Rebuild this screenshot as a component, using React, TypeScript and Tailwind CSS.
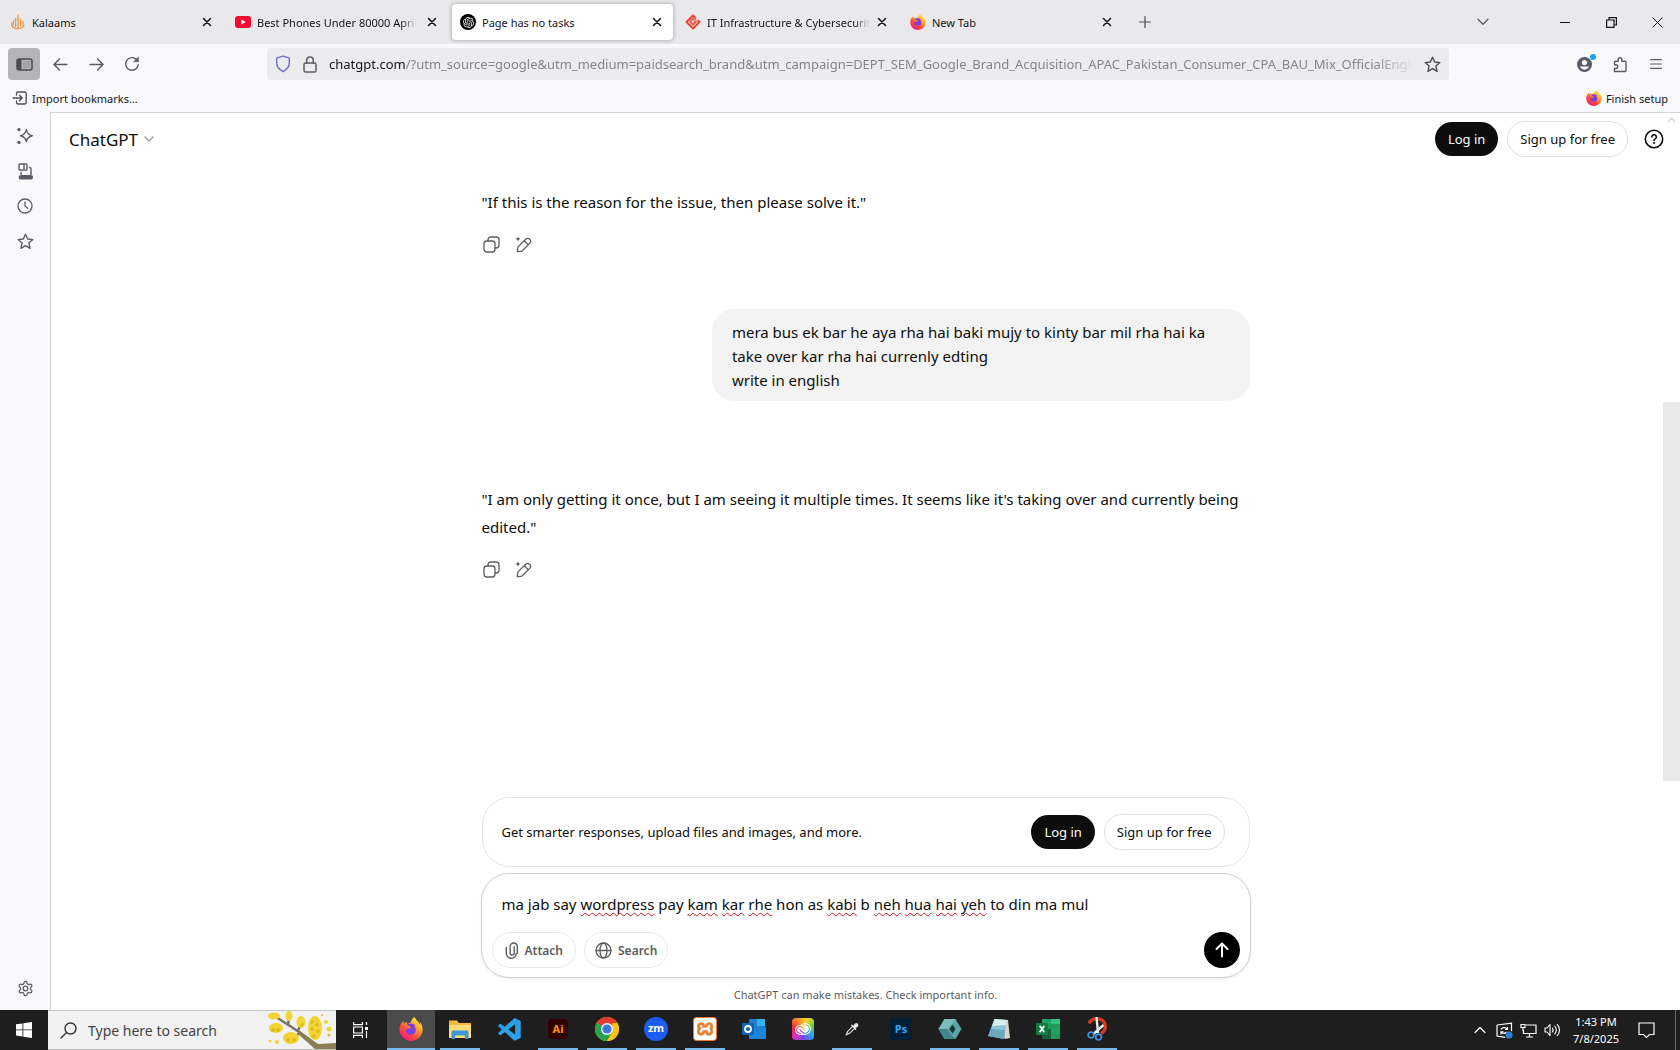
import React, { useState } from "react";
import { SiOpenai, SiFirefoxbrowser, SiXampp, SiAdobecreativecloud } from "react-icons/si";
import { BiLogoVisualStudio } from "react-icons/bi";

const stroke = {
  fill: "none",
  stroke: "currentColor",
  strokeLinecap: "round" as const,
  strokeLinejoin: "round" as const,
};

/* ---------- browser icons ---------- */

function Firefox({ size, id }: { size: number; id: string }) {
  return (
    <svg width={size} height={size} viewBox="0 0 24 24" className="shrink-0" aria-hidden="true">
      <defs>
        <linearGradient id={id} x1="0.85" y1="0.05" x2="0.2" y2="0.95">
          <stop offset="0" stopColor="#fff04a" />
          <stop offset="0.35" stopColor="#ffa62b" />
          <stop offset="0.65" stopColor="#ff4f3d" />
          <stop offset="1" stopColor="#ee1a78" />
        </linearGradient>
      </defs>
      <circle cx="12" cy="13" r="7.5" fill="#7a3fe0" />
      <SiFirefoxbrowser size={24} fill={`url(#${id})`} />
    </svg>
  );
}

function Close() {
  return (
    <svg width="10" height="10" viewBox="0 0 10 10" {...stroke} strokeWidth="1.5">
      <path d="M1.5 1.5l7 7M8.5 1.5l-7 7" />
    </svg>
  );
}

function KalaamsIcon() {
  return (
    <svg width="16" height="16" viewBox="0 0 16 16" {...stroke} stroke="#f0953f" strokeWidth="1.3">
      <path d="M8 1v13M5.6 4.5v8M3.3 7v4M10.6 5v6.5M13 7.5V11M1.5 9.5c0 3 2.6 5.3 6 5.300M8 14.500c3 0 5-1 6-3" />
    </svg>
  );
}

function YoutubeIcon() {
  return (
    <svg width="16" height="16" viewBox="0 0 16 16">
      <rect x="0" y="2" width="16" height="12" rx="3" fill="#f8082f" />
      <path d="M6.3 5.4v5.2L10.8 8z" fill="#fff" />
    </svg>
  );
}

function ChatGptFavicon() {
  return (
    <span className="flex size-4 items-center justify-center rounded-full bg-black text-white">
      <SiOpenai size={11} />
    </span>
  );
}

function RedDiamond() {
  return (
    <svg width="16" height="16" viewBox="0 0 16 16" fill="none" stroke="#ea4335" strokeWidth="2" strokeLinejoin="round">
      <path d="M10.5 3.8L8 1.5 1.5 8 8 14.5 14.5 8l-1.8-1.7" />
      <path d="M11 5.500L8.600 3.800 5 7.600l3 3.100 3.300-3.300H8.400" stroke="#f0604d" />
    </svg>
  );
}

function Puzzle() {
  return (
    <svg width="17" height="17" viewBox="0 0 17 17" {...stroke} strokeWidth="1.4">
      <path d="M2.5 15.5H13a1 1 0 0 0 1-1V6.300a1 1 0 0 0-1-1H9.800V3.500a1.800 1.800 0 0 0-3.600 0v1.800H3.500a1 1 0 0 0-1 1v2.400h1.300a1.900 1.900 0 0 1 0 3.800H2.500z" />
    </svg>
  );
}

function Star({ size }: { size: number }) {
  return (
    <svg width={size} height={size} viewBox="0 0 16 16" {...stroke} strokeWidth="1.3">
      <path d="M8 1.200l2 4.500 4.900.5-3.700 3.300 1.100 4.900L8 11.900l-4.300 2.500 1.100-4.900L1.100 6.200 6 5.700z" />
    </svg>
  );
}

/* ---------- window chrome ---------- */

const tabs = [
  { title: "Kalaams", icon: <KalaamsIcon /> },
  { title: "Best Phones Under 80000 April", icon: <YoutubeIcon />, fade: true },
  { title: "Page has no tasks", icon: <ChatGptFavicon />, active: true },
  { title: "IT Infrastructure & Cybersecurit", icon: <RedDiamond />, fade: true },
  { title: "New Tab", icon: <Firefox size={16} id="ff-tab" /> },
];

function TabStrip() {
  return (
    <div className="flex h-11 items-center bg-[#e9e9eb] pl-0.5 text-[#15141a]">
      <div className="flex min-w-0 gap-1" role="tablist">
        {tabs.map((t) => (
          <div
            key={t.title}
            className={
              t.active
                ? "flex h-9 w-[221px] items-center rounded bg-white pr-[11px] pl-2 shadow-[0_0_4px_rgba(0,0,0,0.35)]"
                : "flex h-9 w-[221px] items-center rounded pr-[11px] pl-2"
            }
          >
            <button role="tab" aria-selected={!!t.active} className="flex min-w-0 flex-1 items-center gap-1.5">
              <span className="shrink-0">{t.icon}</span>
              <span
                className={
                  t.fade
                    ? "pt-0.5 text-[11px] whitespace-nowrap [mask-image:linear-gradient(to_left,transparent,black_16px)]"
                    : "pt-0.5 text-[11px] whitespace-nowrap"
                }
              >
                {t.title}
              </span>
            </button>
            <button aria-label={`Close ${t.title}`} className="shrink-0">
              <Close />
            </button>
          </div>
        ))}
      </div>
      <button aria-label="New tab" className="ml-3 p-1 text-[#4a4a52]">
        <svg width="12" height="12" viewBox="0 0 12 12" {...stroke} strokeWidth="1.2">
          <path d="M6 .6v10.800M.6 6h10.800" />
        </svg>
      </button>
      <div className="ml-auto flex items-center text-[#15141a]">
        <button aria-label="List all tabs" className="mr-9 flex w-[46px] justify-center text-[#5b5b66]">
          <svg width="12" height="8" viewBox="0 0 12 8" {...stroke} strokeWidth="1.3">
            <path d="M1 1.200l5 5 5-5" />
          </svg>
        </button>
        <button aria-label="Minimize" className="flex w-[46px] justify-center">
          <svg width="10" height="10" viewBox="0 0 10 10" stroke="currentColor">
            <path d="M0 5.5h10" />
          </svg>
        </button>
        <button aria-label="Restore" className="flex w-[46px] justify-center">
          <svg width="11" height="11" viewBox="0 0 11 11" fill="none" stroke="currentColor" strokeWidth="1.2">
            <path d="M.6 3h7.400v7.400H.6zM3 3V.6h7.400V8H8" />
          </svg>
        </button>
        <button aria-label="Close window" className="flex w-[46px] justify-center">
          <svg width="11" height="11" viewBox="0 0 11 11" stroke="currentColor">
            <path d="M.5.5l10 10M10.500.5l-10 10" />
          </svg>
        </button>
      </div>
    </div>
  );
}

const urlTail =
  "/?utm_source=google&utm_medium=paidsearch_brand&utm_campaign=DEPT_SEM_Google_Brand_Acquisition_APAC_Pakistan_Consumer_CPA_BAU_Mix_OfficialEngli";

function Toolbar() {
  return (
    <div className="flex h-10 items-center px-2 text-[#5b5b66]">
      <button aria-label="Toggle sidebar" className="flex size-8 items-center justify-center rounded bg-[#b4b4b8] text-[#4a4a55]">
        <svg width="17" height="13" viewBox="0 0 17 13">
          <rect x="1" y="1" width="15" height="11" rx="2" fill="none" stroke="currentColor" strokeWidth="1.5" />
          <path d="M1 1h4.500v11H1z" fill="currentColor" />
          <rect x="7" y="3" width="7.5" height="7" fill="#a2a2a8" />
        </svg>
      </button>
      <div className="ml-1 flex gap-1">
        <button aria-label="Back" className="flex size-8 items-center justify-center">
          <svg width="15" height="13" viewBox="0 0 15 13" {...stroke} strokeWidth="1.5">
            <path d="M14 6.500H1.200M6.400 1L1 6.500 6.400 12" />
          </svg>
        </button>
        <button aria-label="Forward" className="flex size-8 items-center justify-center">
          <svg width="15" height="13" viewBox="0 0 15 13" {...stroke} strokeWidth="1.5">
            <path d="M1 6.500h12.800M8.600 1L14 6.500 8.600 12" />
          </svg>
        </button>
        <button aria-label="Reload" className="flex size-8 items-center justify-center">
          <svg width="16" height="16" viewBox="0 0 16 16" {...stroke} strokeWidth="1.4">
            <path d="M14.200 8.800A6.300 6.300 0 1 1 12.600 3.700" />
            <path d="M14.400 1.200v4.600H9.800z" fill="currentColor" strokeWidth=".6" />
          </svg>
        </button>
      </div>
      <div className="ml-[119px] flex h-8 min-w-0 flex-1 items-center rounded bg-[#ececee] px-2">
        <svg width="16" height="18" viewBox="0 0 16 18" {...stroke} stroke="#6f6bd0" strokeWidth="1.4" className="shrink-0">
          <path d="M8 1.200l6.300 2v4.600c0 4-2.600 7-6.300 8.900-3.700-1.900-6.300-4.900-6.300-8.900V3.200z" />
        </svg>
        <svg width="14" height="17" viewBox="0 0 14 17" {...stroke} strokeWidth="1.5" className="ml-3 shrink-0">
          <rect x="1" y="7" width="12" height="9" rx="1.5" />
          <path d="M3.700 7V4.300a3.300 3.300 0 0 1 6.600 0V7" />
        </svg>
        <div className="ml-3 min-w-0 pt-0.5 text-[13px] whitespace-nowrap text-[#85858b] [mask-image:linear-gradient(to_left,transparent,black_40px)]">
          <span className="text-[#15141a]">chatgpt.com</span>
          {urlTail}
        </div>
        <button aria-label="Bookmark this page" className="ml-auto shrink-0 text-[#4a4a52]">
          <Star size={17} />
        </button>
      </div>
      <div className="ml-[119px] flex gap-1">
        <button aria-label="Account" className="relative flex size-8 items-center justify-center">
          <svg width="15" height="15" viewBox="0 0 15 15">
            <circle cx="7.5" cy="7.5" r="7.5" fill="#5b5b66" />
            <circle cx="7.5" cy="5.6" r="2.6" fill="#f9f9fb" />
            <path d="M2.900 9.600h9.200a5 5 0 0 1-9.200 0z" fill="#f9f9fb" />
          </svg>
          <span className="absolute top-1.5 right-1 size-1.5 rounded-full bg-[#14a5ec]" />
        </button>
        <button aria-label="Extensions" className="flex size-8 items-center justify-center">
          <Puzzle />
        </button>
        <button aria-label="Menu" className="flex size-8 items-center justify-center">
          <svg width="12" height="12" viewBox="0 0 12 12" {...stroke} strokeWidth="1.2">
            <path d="M.6 1.600h10.800M.6 6h10.800M.6 10.400h10.800" />
          </svg>
        </button>
      </div>
    </div>
  );
}

function BookmarksBar() {
  return (
    <div className="flex h-7 items-center justify-between px-3 text-[11px] text-[#15141a]">
      <button className="flex items-center gap-1">
        <svg width="16" height="14" viewBox="0 0 16 14" {...stroke} stroke="#4a4a52" strokeWidth="1.3">
          <path d="M4.500 4V2.500A1.500 1.500 0 0 1 6 1h6.700a1.500 1.500 0 0 1 1.500 1.500v9a1.500 1.500 0 0 1-1.500 1.500H6a1.500 1.500 0 0 1-1.500-1.500V10M1 7h9M7.500 4.300L10.200 7 7.500 9.700" />
        </svg>
        <span className="pt-0.5">Import bookmarks...</span>
      </button>
      <button className="flex items-center gap-1">
        <Firefox size={16} id="ff-setup" />
        <span className="pt-0.5">Finish setup</span>
      </button>
    </div>
  );
}

function Sidebar() {
  return (
    <aside className="flex w-[50px] shrink-0 flex-col items-center justify-between pt-2 pb-1.5 text-[#5b5b66]">
      <div className="flex flex-col gap-[3px]">
        <button aria-label="AI chatbot" className="flex size-8 items-center justify-center">
          <svg width="18" height="18" viewBox="0 0 18 18" {...stroke} strokeWidth="1.4">
            <path d="M10.300 2.800c.8 3.700 2.200 5 6 5.900-3.800.8-5.200 2.200-6 5.900-.8-3.700-2.200-5.100-5.900-5.900 3.700-.9 5.100-2.200 5.900-5.900z" />
            <circle cx="3" cy="2.600" r="1" fill="currentColor" />
            <circle cx="3" cy="15.400" r="1" fill="currentColor" />
          </svg>
        </button>
        <button aria-label="Synced tabs" className="flex size-8 items-center justify-center">
          <svg width="17" height="17" viewBox="0 0 17 17" {...stroke} strokeWidth="1.4">
            <rect x="2" y="1" width="8" height="6" rx="1" />
            <path d="M7 1.500v4M4 9.500v2.200a1 1 0 0 0 1 1h8a1 1 0 0 0 1-1V6a1.500 1.500 0 0 0-1.500-1.500" />
            <path d="M2.500 13.200h12.700v1.500a1 1 0 0 1-1 1H3.500a1 1 0 0 1-1-1z" fill="currentColor" />
          </svg>
        </button>
        <button aria-label="History" className="flex size-8 items-center justify-center">
          <svg width="16" height="16" viewBox="0 0 16 16" {...stroke} strokeWidth="1.3">
            <circle cx="8" cy="8" r="7" />
            <path d="M8 3.800V8l2.600 2.300" />
          </svg>
        </button>
        <button aria-label="Bookmarks" className="flex size-8 items-center justify-center">
          <Star size={17} />
        </button>
      </div>
      <button aria-label="Customize sidebar" className="flex size-8 items-center justify-center">
        <svg width="17" height="17" viewBox="0 0 24 24" {...stroke} strokeWidth="1.8">
          <path d="M12.220 2h-.44a2 2 0 0 0-2 2v.18a2 2 0 0 1-1 1.730l-.43.25a2 2 0 0 1-2 0l-.15-.08a2 2 0 0 0-2.730.73l-.22.38a2 2 0 0 0 .73 2.730l.15.100a2 2 0 0 1 1 1.720v.51a2 2 0 0 1-1 1.740l-.15.090a2 2 0 0 0-.73 2.730l.22.38a2 2 0 0 0 2.730.73l.15-.08a2 2 0 0 1 2 0l.43.25a2 2 0 0 1 1 1.730V20a2 2 0 0 0 2 2h.44a2 2 0 0 0 2-2v-.18a2 2 0 0 1 1-1.730l.43-.25a2 2 0 0 1 2 0l.15.080a2 2 0 0 0 2.730-.73l.22-.39a2 2 0 0 0-.73-2.730l-.15-.08a2 2 0 0 1-1-1.740v-.5a2 2 0 0 1 1-1.740l.15-.09a2 2 0 0 0 .73-2.730l-.22-.38a2 2 0 0 0-2.730-.73l-.15.080a2 2 0 0 1-2 0l-.43-.25a2 2 0 0 1-1-1.730V4a2 2 0 0 0-2-2z" />
          <circle cx="12" cy="12" r="3.2" />
        </svg>
      </button>
    </aside>
  );
}

/* ---------- chat ---------- */

function AuthButtons() {
  return (
    <div className="flex items-center gap-[9px] text-[13px]">
      <button className="h-[34px] rounded-full bg-[#0d0d0d] px-[13px] pt-0.5 text-white">Log in</button>
      <button className="h-9 rounded-full border border-[#dedede] bg-white px-3 pt-0.5 text-[#0d0d0d]">
        Sign up for free
      </button>
    </div>
  );
}

function MessageActions() {
  return (
    <div className="mt-3 -ml-1.5 flex text-[#5d5d5d]">
      <button aria-label="Copy" className="flex size-8 items-center justify-center">
        <svg width="17" height="17" viewBox="0 0 17 17" {...stroke} strokeWidth="1.3">
          <rect x="1" y="5" width="11" height="11" rx="2.8" />
          <path d="M5 5V3.800A2.800 2.800 0 0 1 7.800 1h5.400A2.800 2.800 0 0 1 16 3.800v5.400a2.800 2.800 0 0 1-2.800 2.800H12" />
        </svg>
      </button>
      <button aria-label="Edit in canvas" className="flex size-8 items-center justify-center">
        <svg width="17" height="17" viewBox="0 0 17 17" {...stroke} strokeWidth="1.3">
          <path d="M2.300 15.700l.4-3.600a3 3 0 0 1 .8-1.700l7.100-7.100a2.950 2.950 0 0 1 4.100 0 2.950 2.950 0 0 1 0 4.100l-7.100 7.100a3 3 0 0 1-1.700.8zM9.300 4.700l4 4" />
          <path d="M3 0c.3 1.900.8 2.500 2.800 2.900C3.800 3.300 3.300 3.900 3 5.800c-.3-1.900-.8-2.500-2.800-2.900C2.200 2.500 2.700 1.900 3 0z" fill="currentColor" stroke="none" />
        </svg>
      </button>
    </div>
  );
}

const misspelt = new Set(["wordpress", "kam", "kar", "rhe", "kabi", "neh", "hua", "hai", "yeh"]);

function Composer() {
  const [draft, setDraft] = useState(
    "ma jab say wordpress pay kam kar rhe hon as kabi b neh hua hai yeh to din ma mul",
  );
  return (
    <form
      className="-mx-px mt-1.5 rounded-[28px] border border-[#cfcfcf] bg-white px-2.5 pt-[18px] pb-[9px] shadow-[0_1px_3px_rgba(0,0,0,0.08)]"
      onSubmit={(e) => e.preventDefault()}
    >
      <div className="grid px-2.5 text-[15px] leading-6">
        <textarea
          aria-label="Message ChatGPT"
          rows={1}
          spellCheck={false}
          value={draft}
          onChange={(e) => setDraft(e.target.value)}
          className="col-start-1 row-start-1 block w-full resize-none overflow-hidden text-[#0d0d0d] outline-none"
        />
        <div aria-hidden="true" className="pointer-events-none col-start-1 row-start-1 whitespace-pre-wrap text-transparent">
          {draft.split(" ").map((w, i) => (
            <React.Fragment key={i}>
              {i > 0 && " "}
              {misspelt.has(w) ? (
                <span className="underline decoration-[#d01822] decoration-wavy decoration-1 underline-offset-2 [text-decoration-skip-ink:none]">
                  {w}
                </span>
              ) : (
                w
              )}
            </React.Fragment>
          ))}
        </div>
      </div>
      <div className="mt-4 flex items-center gap-2 text-[12px] font-semibold text-[#5d5d5d]">
        <button type="button" className="flex h-9 items-center gap-1.5 rounded-full border border-[#e8e8e8] px-3">
          <svg width="14" height="17" viewBox="0 0 14 17" {...stroke} strokeWidth="1.4">
            <path d="M1.300 5.500v5.700a5 5 0 0 0 10 .3M12.300 4.500v6.700M12.300 9V4.600a3.600 3.600 0 0 0-7.200 0v6.300a2 2 0 0 0 4.100 0V4.800" />
          </svg>
          <span className="pt-0.5">Attach</span>
        </button>
        <button type="button" className="flex h-9 items-center gap-1.5 rounded-full border border-[#e8e8e8] px-2.5">
          <svg width="17" height="17" viewBox="0 0 17 17" {...stroke} strokeWidth="1.3">
            <circle cx="8.5" cy="8.5" r="7.5" />
            <ellipse cx="8.5" cy="8.5" rx="3.5" ry="7.5" />
            <path d="M1 8.500h15" />
          </svg>
          <span className="pt-0.5">Search</span>
        </button>
        <button type="submit" aria-label="Send message" className="ml-auto flex size-9 items-center justify-center rounded-full bg-black text-white">
          <svg width="14" height="16" viewBox="0 0 14 16" {...stroke} strokeWidth="2">
            <path d="M7 14.500V1.800M1.500 7L7 1.500 12.500 7" />
          </svg>
        </button>
      </div>
    </form>
  );
}

function Chat() {
  return (
    <main className="relative flex min-w-0 flex-1 flex-col border-t border-l border-[#d2d2d4] bg-white text-[#0d0d0d]">
      <header className="flex h-[52px] shrink-0 items-center pr-4 pl-[18px]">
        <button className="mr-auto flex items-center gap-1.5 text-[17px]">
          <span className="pt-0.5">ChatGPT</span>
          <svg width="10" height="7" viewBox="0 0 10 7" {...stroke} stroke="#9b9b9b" strokeWidth="1.4">
            <path d="M1 1l4 4 4-4" />
          </svg>
        </button>
        <AuthButtons />
        <button aria-label="Help" className="ml-4">
          <svg width="20" height="20" viewBox="0 0 20 20" {...stroke} strokeWidth="1.6">
            <circle cx="10" cy="10" r="8.7" />
            <path d="M7.800 7.900a2.250 2.250 0 1 1 3.400 2c-.8.500-1.200.9-1.200 1.700" />
            <circle cx="10" cy="14" r=".6" fill="currentColor" strokeWidth=".8" />
          </svg>
        </button>
      </header>

      <div className="mx-auto flex w-full max-w-[768px] flex-1 flex-col">
        <article className="pt-[23px] text-[15px] leading-7">
          <p>"If this is the reason for the issue, then please solve it."</p>
          <MessageActions />
        </article>
        <article className="mt-[49px] ml-auto w-[70%] rounded-[22px] bg-[#f3f3f3] px-5 pt-[11px] pb-[9px] text-[15px] leading-6">
          mera bus ek bar he aya rha hai baki mujy to kinty bar mil rha hai ka take over kar rha hai currenly edting
          <br />
          write in english
        </article>
        <article className="mt-[84px] text-[15px] leading-7">
          <p>
            "I am only getting it once, but I am seeing it multiple times. It seems like it's taking over and currently
            being edited."
          </p>
          <MessageActions />
        </article>

        <div className="mt-auto">
          <div className="flex h-[70px] items-center justify-between rounded-[28px] border border-[#e6e6e6] pr-6 pl-[19px]">
            <p className="pt-0.5 text-[13px]">Get smarter responses, upload files and images, and more.</p>
            <AuthButtons />
          </div>
          <Composer />
          <p className="flex h-8 items-center justify-center pt-0.5 text-[11px] text-[#5d5d5d]">
            ChatGPT can make mistakes. Check important info.
          </p>
        </div>
      </div>

      <div className="absolute inset-y-0 right-0 flex w-[17px] flex-col items-center" aria-hidden="true">
        <svg width="9" height="6" viewBox="0 0 9 6" {...stroke} stroke="#d8d8d8" strokeWidth="1.3" className="mt-1 mb-[279px]">
          <path d="M1 5l3.500-4L8 5" />
        </svg>
        <div className="h-[379px] w-full bg-[#e9e9e9]" />
      </div>
    </main>
  );
}

/* ---------- taskbar ---------- */

function Explorer() {
  return (
    <svg width="24" height="24" viewBox="0 0 24 24">
      <path d="M1 3.500h8l2 2.500h12v15H1z" fill="#f5b83d" />
      <path d="M1 8h22v13H1z" fill="#fddc78" />
      <path d="M5 13.500h14a1.500 1.500 0 0 1 1.500 1.500v7h-3.500v-3.500H7V22H3.500v-7A1.500 1.500 0 0 1 5 13.500z" fill="#3e97d8" />
    </svg>
  );
}

function Chrome() {
  return (
    <svg width="24" height="24" viewBox="0 0 24 24">
      <circle cx="12" cy="12" r="12" fill="#fbc116" />
      <path d="M12 12L1.600 6A12 12 0 0 1 22.400 6z" fill="#e33b2e" />
      <path d="M1.600 6A12 12 0 0 0 12 24l5.200-9L12 12z" fill="#2ba24c" />
      <path d="M22.400 6A12 12 0 0 1 12 24l5.200-9V6z" fill="#fbc116" />
      <circle cx="12" cy="12" r="6" fill="#fff" />
      <circle cx="12" cy="12" r="4.6" fill="#3b78e7" />
    </svg>
  );
}

function Outlook() {
  return (
    <svg width="24" height="24" viewBox="0 0 24 24">
      <rect x="7" y="2" width="16" height="13" rx="1" fill="#1f7fd1" />
      <path d="M15 2h8v7h-8z" fill="#36b0ee" />
      <path d="M7 11l8 4 9-5v11a1 1 0 0 1-1 1H8a1 1 0 0 1-1-1z" fill="#1a86d9" />
      <rect x="0" y="6" width="12" height="12" rx="1" fill="#0f62b4" />
      <circle cx="6" cy="12" r="3" fill="none" stroke="#fff" strokeWidth="1.8" />
    </svg>
  );
}

function Eyedropper() {
  return (
    <svg width="14" height="14" viewBox="0 0 16 16" fill="none" stroke="#e8e8e8" strokeWidth="1.3" strokeLinecap="round">
      <path d="M8.800 5L3 10.800 1.500 14.500l3.700-1.500L11 7.200" />
      <path d="M7.800 3.800l4.400 4.400M9.800 5.300l2-2.800a1.500 1.500 0 0 1 2.200 2.200l-2.800 2z" fill="#e8e8e8" strokeWidth="1.6" />
    </svg>
  );
}

function Hexagon() {
  return (
    <svg width="24" height="24" viewBox="0 0 24 24">
      <path d="M6.500 2h11L23.500 12l-6 10h-11L.5 12z" fill="#5ba3a5" />
      <path d="M.5 12h9l2.500 5 5.500 5h-11z" fill="#3f8589" />
      <path d="M6.500 2h11l-5 7-3 3h-9z" fill="#79bebd" />
      <path d="M14.500 7.500l3 4.500-3 4.500-3-4.500z" fill="#163438" />
    </svg>
  );
}

function Notepad() {
  return (
    <svg width="24" height="24" viewBox="0 0 24 24">
      <path d="M7.500 2.500L21 3l2 18-5 1z" fill="#d9d5c9" />
      <path d="M7.500 2L20 3l-3 19L1 19z" fill="#8fc3d6" />
      <path d="M7.500 2L20 3l-1 5L5 9z" fill="#d7ecf3" />
      <path d="M4 12l14 1-1 9L1 19z" fill="#6ba7bd" />
    </svg>
  );
}

function Excel() {
  return (
    <svg width="24" height="24" viewBox="0 0 24 24">
      <rect x="6" y="2" width="18" height="20" rx="1" fill="#1f9a5b" />
      <path d="M15 2h9v5h-9z" fill="#33c481" />
      <path d="M6 2h9v5H6zM15 12h9v5h-9z" fill="#21a366" />
      <path d="M6 12h9v10H6z" fill="#17603a" />
      <rect x="0" y="6" width="12" height="12" rx="1" fill="#107c41" />
      <path d="M3.700 8.800l4.600 6.400M8.300 8.800l-4.600 6.400" stroke="#fff" strokeWidth="1.7" />
    </svg>
  );
}

function Snip() {
  return (
    <svg width="24" height="26" viewBox="0 0 24 26" fill="none">
      <path d="M4 7.500C6 2.500 13 1 17.500 4.500S21 15 16 17.500" stroke="#d83a20" strokeWidth="3.2" />
      <path d="M11.500 1l1.500 16M18.500 9l-10 9" stroke="#e8edf0" strokeWidth="2.4" />
      <circle cx="6" cy="19" r="2.8" stroke="#3a8fd8" strokeWidth="1.8" />
      <circle cx="13.500" cy="21" r="2.8" stroke="#3a8fd8" strokeWidth="1.8" />
    </svg>
  );
}

function CreativeCloud() {
  return (
    <span className="flex size-[22px] items-center justify-center rounded bg-[conic-gradient(from_20deg,#f7d32c,#6fd23f,#2aa6e8,#6a4bf0,#e02bc0,#f02b3c,#f98a2a,#f7d32c)] text-white">
      <SiAdobecreativecloud size={16} />
    </span>
  );
}

const tile = "flex items-center justify-center text-[11px] font-bold";

const apps: { name: string; icon: React.ReactNode; open?: boolean; active?: boolean }[] = [
  { name: "Firefox", icon: <Firefox size={24} id="ff-task" />, active: true },
  { name: "File Explorer", icon: <Explorer />, open: true },
  { name: "Visual Studio Code", icon: <BiLogoVisualStudio size={27} color="#2b9fe6" /> },
  {
    name: "Illustrator",
    icon: <span className={`${tile} size-[20px] rounded-sm bg-[#330000] text-[#ff9a00]`}>Ai</span>,
    open: true,
  },
  { name: "Chrome", icon: <Chrome />, open: true },
  {
    name: "Zoom",
    icon: <span className={`${tile} size-6 rounded-full bg-[#1c5cf0] pb-0.5 text-white`}>zm</span>,
    open: true,
  },
  {
    name: "XAMPP",
    icon: (
      <span className="flex size-6 items-center justify-center rounded bg-[#ee7a2d] text-white">
        <SiXampp size={22} />
      </span>
    ),
    open: true,
  },
  { name: "Outlook", icon: <Outlook /> },
  { name: "Creative Cloud", icon: <CreativeCloud /> },
  { name: "Color picker", icon: <Eyedropper />, open: true },
  {
    name: "Photoshop",
    icon: <span className={`${tile} size-[22px] rounded-sm bg-[#001e36] text-[#31a8ff]`}>Ps</span>,
  },
  { name: "Hex editor", icon: <Hexagon />, open: true },
  { name: "Notepad", icon: <Notepad />, open: true },
  { name: "Excel", icon: <Excel />, open: true },
  { name: "Snipping Tool", icon: <Snip />, open: true },
];

function MimosaBranch() {
  return (
    <svg width="68" height="38" viewBox="0 0 68 38" className="shrink-0 self-end">
      <path
        d="M8 6l14 9 12 8 12 9 6 4M21 7l-1 7M33 12l-3 8M24 27l8-5"
        fill="none"
        stroke="#7b7461"
        strokeWidth="2.5"
        strokeLinecap="round"
      />
      <path d="M32 20l12 9 6 4 18-1v6H47L30 23z" fill="#8d7d57" />
      <g fill="#f2d534">
        <ellipse cx="6" cy="5" rx="6" ry="3.5" />
        <ellipse cx="21" cy="5" rx="3.5" ry="5" />
        <ellipse cx="8" cy="17" rx="7" ry="5" />
        <ellipse cx="33" cy="11" rx="4.5" ry="6" />
        <ellipse cx="23" cy="27" rx="8" ry="6" />
        <ellipse cx="47" cy="17" rx="7" ry="12" />
        <circle cx="61" cy="18" r="2.5" />
        <circle cx="9" cy="31" r="2" />
        <circle cx="2" cy="30" r="1.5" />
        <circle cx="58" cy="11" r="2" />
      </g>
      <g fill="#e0b91f">
        <circle cx="5" cy="19" r="2" />
        <circle cx="10" cy="19" r="2" />
        <circle cx="20" cy="29" r="2" />
        <circle cx="26" cy="29" r="2" />
        <circle cx="44" cy="11" r="1.8" />
        <circle cx="49" cy="14" r="1.8" />
        <circle cx="44" cy="18" r="1.8" />
        <circle cx="50" cy="20" r="1.8" />
        <circle cx="46" cy="25" r="1.8" />
        <circle cx="34" cy="14" r="1.8" />
        <circle cx="54" cy="4" r="1" />
        <circle cx="61" cy="24" r="1.5" />
      </g>
    </svg>
  );
}

function Taskbar() {
  return (
    <footer className="flex h-10 shrink-0 bg-[#1e1e1e] text-white">
      <button aria-label="Start" className="flex w-12 items-center justify-center">
        <svg width="16" height="16" viewBox="0 0 16 16" fill="currentColor">
          <path d="M0 2.300l6.500-.9v6.100H0zM7.300 1.300L16 0v7.500H7.300zM0 8.300h6.500v6.200L0 13.600zM7.300 8.300H16V16l-8.700-1.300z" />
        </svg>
      </button>
      <label className="flex w-72 items-center border-y border-[#c4c4c4] bg-[#f2f2f2] pl-3 text-[#333]">
        <svg width="17" height="17" viewBox="0 0 17 17" {...stroke} strokeWidth="1.4">
          <circle cx="10.5" cy="6.5" r="5.5" />
          <path d="M6.500 10.500L1 16" />
        </svg>
        <input
          type="text"
          aria-label="Type here to search"
          placeholder="Type here to search"
          className="ml-[11px] w-0 flex-1 text-[14px] outline-none placeholder:text-[#444]"
        />
        <MimosaBranch />
      </label>
      <button aria-label="Task view" className="flex w-12 items-center justify-center">
        <svg width="17" height="16" viewBox="0 0 17 16" fill="none" stroke="currentColor" strokeWidth="1.2">
          <path d="M1.600 0v2.600h8.800V0M1.600 5h8.800v6H1.600zM1.600 16v-2.600h8.800V16M14.500 0v3M14.500 9v7" />
          <path d="M13 5h3v3h-3z" fill="currentColor" stroke="none" />
        </svg>
      </button>
      <nav className="ml-[3px] flex gap-px" aria-label="Running apps">
        {apps.map((a) => (
          <button
            key={a.name}
            aria-label={a.name}
            className={a.active ? "flex w-12 flex-col items-center bg-[#4b4b4b]" : "flex w-12 flex-col items-center"}
          >
            <span className="flex flex-1 items-center">{a.icon}</span>
            <span
              className={a.active ? "h-0.5 w-full bg-[#76b9ed]" : a.open ? "h-0.5 w-10 bg-[#76b9ed]" : "h-0.5 w-10"}
            />
          </button>
        ))}
      </nav>
      <div className="ml-auto flex items-center">
        <button aria-label="Show hidden icons" className="flex w-6 justify-center">
          <svg width="12" height="8" viewBox="0 0 12 8" {...stroke} strokeWidth="1.2">
            <path d="M1 6.500l5-5 5 5" />
          </svg>
        </button>
        <button aria-label="Sync" className="flex w-6 justify-center">
          <svg width="17" height="17" viewBox="0 0 17 17" fill="none" stroke="currentColor" strokeWidth="1.2">
            <path d="M1 3l14.500-1.800v8M1 3v11l8 1.300" />
            <path d="M5 7.500a3.500 3.500 0 0 1 5.500-1l1 1M11.500 5v2.500H9M10.500 10a3.500 3.500 0 0 1-4 1L5 9.800M5 12.500V9.800h2.500" />
            <circle cx="13" cy="13" r="3.6" fill="#2e7fd4" stroke="none" />
          </svg>
        </button>
        <button aria-label="Network" className="flex w-6 justify-center">
          <svg width="17" height="15" viewBox="0 0 17 15" fill="none" stroke="currentColor" strokeWidth="1.2">
            <path d="M6 2h10v8.500H3.500V7M9.500 10.500V14M6 14h7M1 1.500h4v3H1zM3 4.500V8" />
          </svg>
        </button>
        <button aria-label="Volume" className="flex w-6 justify-center">
          <svg width="17" height="14" viewBox="0 0 17 14" {...stroke} strokeWidth="1.1">
            <path d="M1 5v4h2l3 3.500v-11L3 5zM8.300 5a3 3 0 0 1 0 4M10.800 3.200a5.500 5.500 0 0 1 0 7.600M13.300 1.300a8.500 8.500 0 0 1 0 11.400" />
          </svg>
        </button>
        <div className="flex w-16 flex-col items-center text-[11px] leading-[17px]">
          <time>1:43 PM</time>
          <time>7/8/2025</time>
        </div>
        <button aria-label="Notifications" className="flex w-9 justify-center">
          <svg width="17" height="17" viewBox="0 0 17 17" fill="none" stroke="currentColor" strokeWidth="1.2">
            <path d="M1 1h15v11.500h-4.500L8.500 15.500l-3-3H1z" />
          </svg>
        </button>
        <span className="mr-1 ml-[11px] h-10 w-px bg-[#6a6a6a]" />
      </div>
    </footer>
  );
}

export default function App() {
  return (
    <div className="flex min-h-screen flex-col bg-[#f9f9fb] font-['Noto_Sans','Open_Sans',sans-serif]">
      <TabStrip />
      <Toolbar />
      <BookmarksBar />
      <div className="flex flex-1">
        <Sidebar />
        <Chat />
      </div>
      <Taskbar />
    </div>
  );
}
